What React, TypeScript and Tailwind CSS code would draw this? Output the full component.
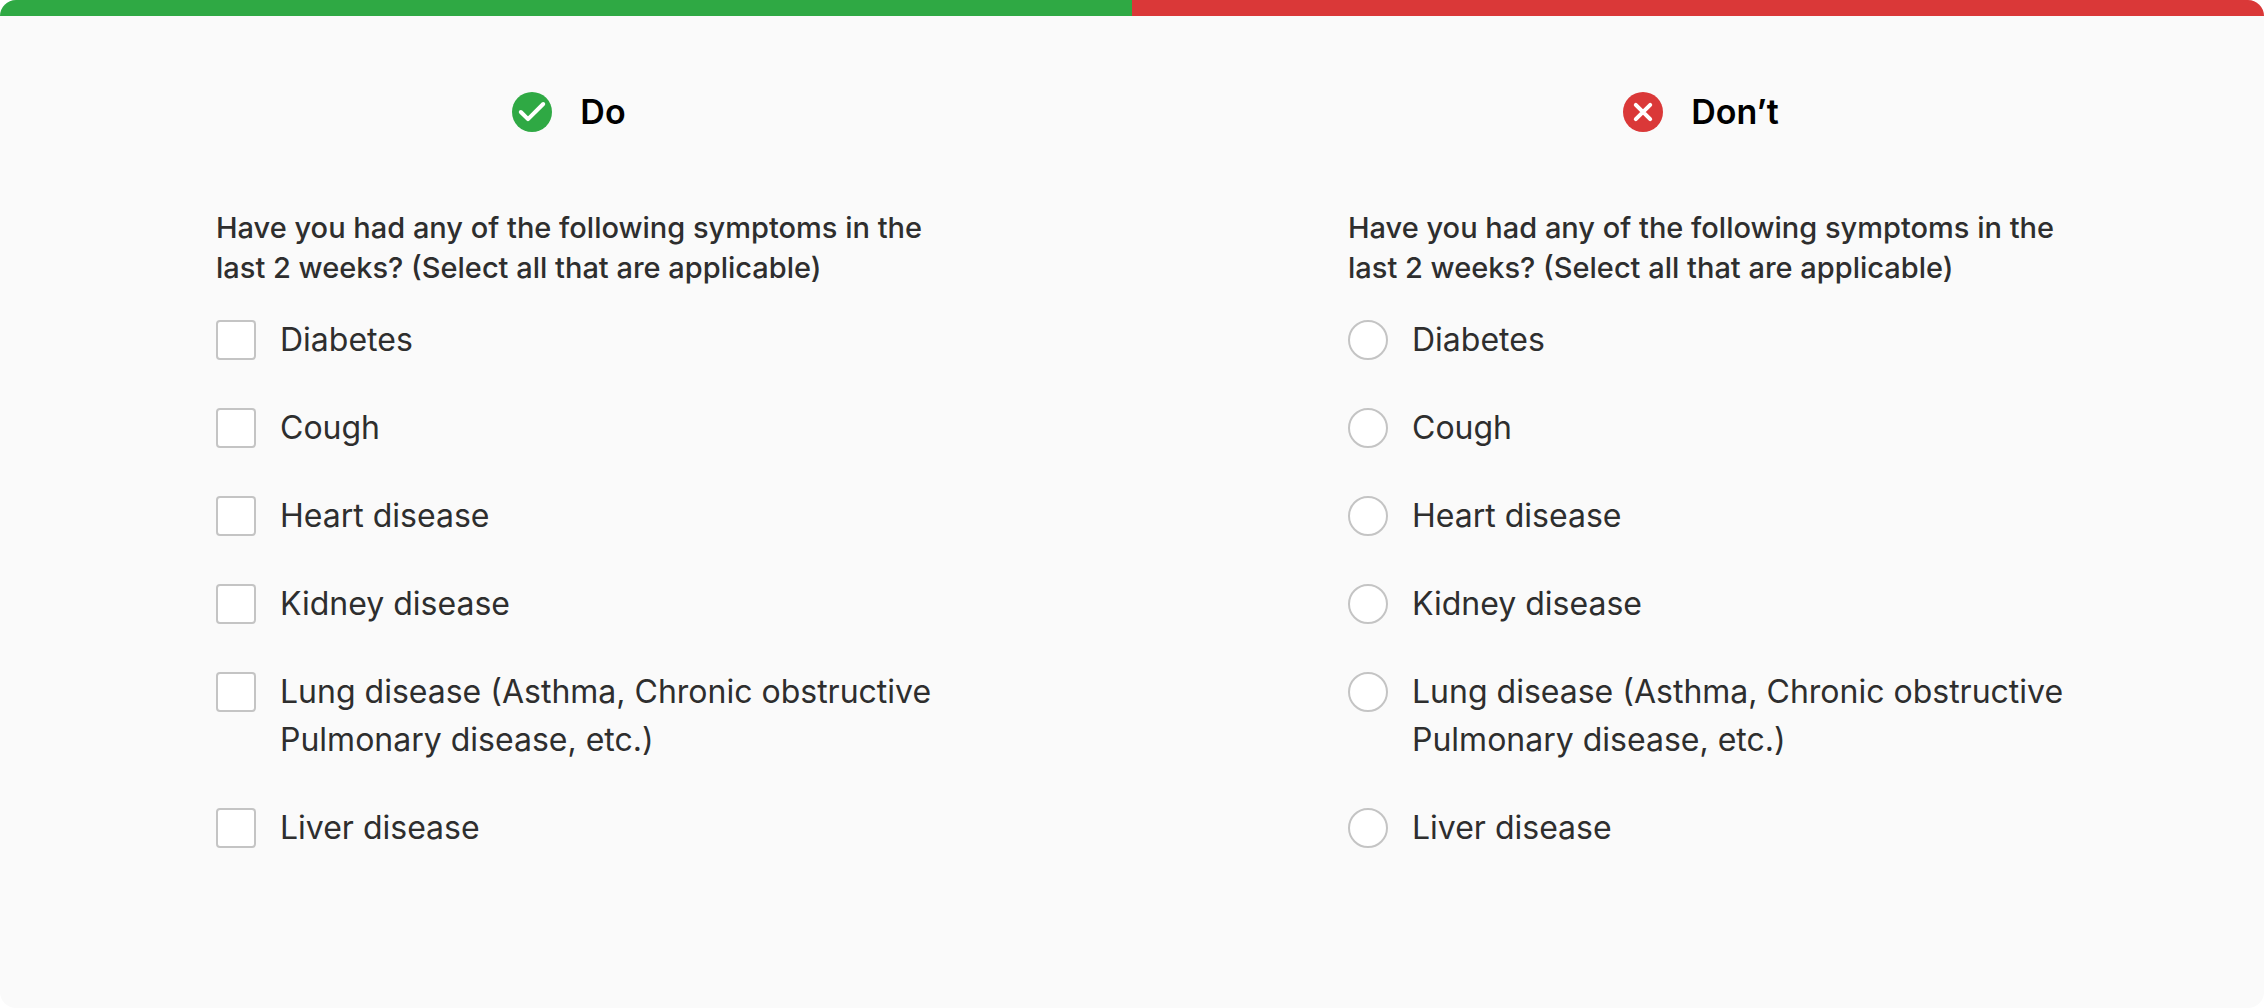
import React from "react";

const options = [
  "Diabetes",
  "Cough",
  "Heart disease",
  "Kidney disease",
  "Lung disease (Asthma, Chronic obstructive Pulmonary disease, etc.)",
  "Liver disease",
];

function CheckIcon() {
  return (
    <svg viewBox="0 0 40 40" className="size-10" aria-hidden="true">
      <circle cx="20" cy="20" r="20" fill="#2fa944" />
      <path d="M8.8 20l7.2 7.2L31.2 12" fill="none" stroke="#fff" strokeWidth="4" strokeLinecap="round" strokeLinejoin="round" />
    </svg>
  );
}

function CrossIcon() {
  return (
    <svg viewBox="0 0 40 40" className="size-10" aria-hidden="true">
      <circle cx="20" cy="20" r="20" fill="#da3838" />
      <path d="M12.8 12.8l14.4 14.4M27.2 12.8L12.8 27.2" fill="none" stroke="#fff" strokeWidth="4" strokeLinecap="round" />
    </svg>
  );
}

function Panel({ title, type }: { title: string; type: "checkbox" | "radio" }) {
  const isCheck = type === "checkbox";
  return (
    <section className={`flex flex-col border-t-16 pt-18 ${isCheck ? "border-[#2fa944]" : "border-[#da3838]"}`}>
      <h2 className="flex items-center justify-center gap-7 pl-1.5 text-[34px] leading-12 font-semibold text-black">
        {isCheck ? <CheckIcon /> : <CrossIcon />}
        {title}
      </h2>
      <fieldset className="mt-18 pr-44 pl-54">
        <legend className="text-[29px] leading-10 font-medium text-[#2e2e2e]">
          Have you had any of the following symptoms in the last 2 weeks? (Select all that are applicable)
        </legend>
        <div className="mt-7 flex flex-col gap-10">
          {options.map((option) => (
            <label key={option} className="flex items-start gap-6 text-[32px] leading-12 text-[#2e2e2e]">
              <input
                type={type}
                name={`${type}-symptoms`}
                className={`mt-1 size-10 shrink-0 appearance-none border-2 border-[#c4c4c4] bg-white checked:bg-[#2e2e2e] ${isCheck ? "rounded-[4px]" : "rounded-full"}`}
              />
              {option}
            </label>
          ))}
        </div>
      </fieldset>
    </section>
  );
}

export default function App() {
  return (
    <main className="grid min-h-screen grid-cols-2 overflow-hidden rounded-2xl bg-[#fafafa] font-['Inter',sans-serif]">
      <Panel title="Do" type="checkbox" />
      <Panel title="Don’t" type="radio" />
    </main>
  );
}
